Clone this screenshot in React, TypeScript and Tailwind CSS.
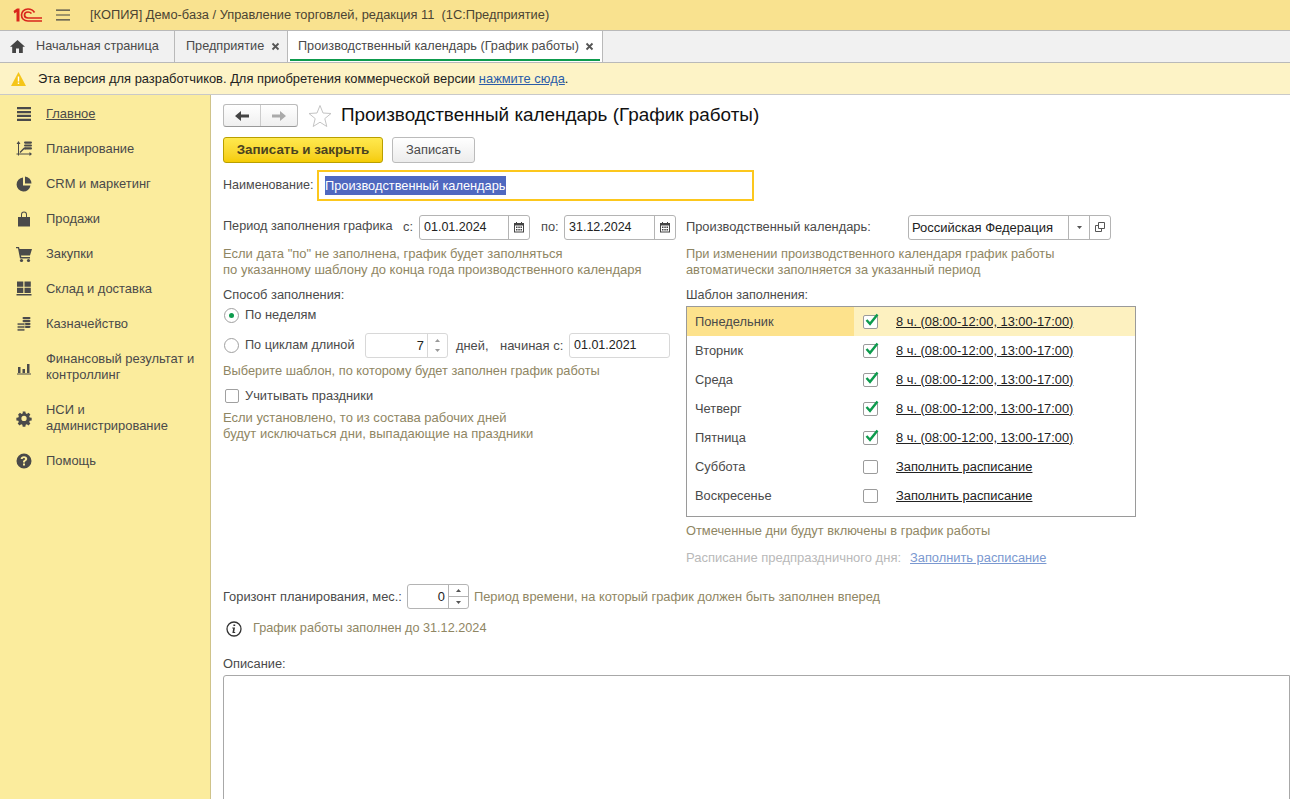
import React from "react";

const G = "#4a4a4a";
const Ico = ({ children }: { children: React.ReactNode }) => (
  <svg width="18" height="18" viewBox="0 0 18 18" fill={G} className="shrink-0">{children}</svg>
);

const Coins = ({ x, y, n, w, halo }: { x: number; y: number; n: number; w: number; halo?: boolean }) => (
  <>
    {Array.from({ length: n }).map((_, i) => (
      <rect key={i} x={x} y={y + i * 2.9} width={w} height="2.200" rx="1.100" stroke={halo ? "#fbec9d" : "none"} strokeWidth={halo ? 0.7 : 0} />
    ))}
  </>
);

const menu: { t: React.ReactNode; k: string; h: number; i: React.ReactNode; u?: boolean }[] = [
  { k: "a", t: "Главное", h: 35, u: true, i: <Ico><path d="M2 2h14v2.300H2zM2 5.900h14v2.300H2zM2 9.800h14v2.300H2zM2 13.700h14V16H2z" /></Ico> },
  { k: "b", t: "Планирование", h: 35, i: <Ico><path d="M3.500 3v12.500M1.500 14H15" fill="none" stroke={G} strokeWidth="1" /><path d="M1.500 4 3.500 1l2 3zM14.500 12l2.500 2-2.500 2z" /><path d="M5 12.500 9 8.500h2" fill="none" stroke={G} strokeWidth="1.300" /><Coins x={9} y={1.500} n={3} w={8} /></Ico> },
  { k: "c", t: "CRM и маркетинг", h: 35, i: <Ico><path d="M8 2.500a7 7 0 1 0 7.500 8H8z" /><path d="M10 1.500a7 7 0 0 1 6.500 7H10z" /></Ico> },
  { k: "d", t: "Продажи", h: 35, i: <Ico><path d="M3 7h3V4.500a3 3 0 0 1 6 0V7h3v9.500H3zM7 7h4V4.500a2 2 0 0 0-4 0z" fillRule="evenodd" /></Ico> },
  { k: "e", t: "Закупки", h: 35, i: <Ico><path d="M1 2h3l.5 2H17l-2 6.500H6l.3 1.500H15v1.500H5L3 3.200H1z" /><circle cx="6.500" cy="15.500" r="1.600" /><circle cx="13.500" cy="15.500" r="1.600" /></Ico> },
  { k: "f", t: "Склад и доставка", h: 35, i: <Ico><path d="M2 1.500h6.300v5.200H2zM9.500 1.500h6.300v5.200H9.500zM2 7.800h6.300V13H2zM9.500 7.800h6.300V13H9.500zM1.500 14h15v1.500h-15z" /></Ico> },
  { k: "g", t: "Казначейство", h: 35, i: <Ico><Coins x={7.500} y={2} n={4} w={8} /><Coins x={2} y={8} n={3} w={8} halo /></Ico> },
  { k: "h", t: <>Финансовый результат и<br />контроллинг</>, h: 51, i: <Ico><path d="M3 9h2.500v6H3zM7.500 11H10v4H7.500zM12 6h2.500v9H12zM2 15.500h14v1H2z" /></Ico> },
  { k: "i", t: <>НСИ и<br />администрирование</>, h: 51, i: <Ico><path fillRule="evenodd" d="M7.500 1.500h3l.4 2.200 1.300.6 1.900-1.300 2.100 2.100-1.300 1.900.6 1.300 2.200.4v3l-2.200.4-.6 1.300 1.300 1.900-2.100 2.100-1.900-1.300-1.300.6-.4 2.200h-3l-.4-2.200-1.300-.6-1.900 1.300-2.100-2.100 1.300-1.900-.6-1.300-2.200-.4v-3l2.200-.4.6-1.300L2.300 5.100l2.100-2.100 1.900 1.300 1.300-.6zM9 6.500a3 3 0 1 0 0 6 3 3 0 0 0 0-6z" transform="translate(1.100 1.100) scale(.88)" /></Ico> },
  { k: "j", t: "Помощь", h: 35, i: <Ico><path fillRule="evenodd" d="M9 1.500a7.500 7.500 0 1 1 0 15 7.500 7.500 0 0 1 0-15zM8 11.500v2h2v-2zM9 4.200c-2 0-3.200 1-3.300 2.800h2c.1-.7.500-1.100 1.200-1.100s1.100.4 1.100 1c0 .5-.3.8-.9 1.200-.9.600-1.100 1.200-1.100 2.400h2c0-.8.200-1.100.9-1.500.9-.6 1.300-1.200 1.300-2.200 0-1.600-1.200-2.600-3.200-2.600z" /></Ico> },
];

const Cal = () => (
  <svg width="12" height="12" viewBox="0 0 12 12" className="shrink-0">
    <path fill="#444" fillRule="evenodd" d="M1 2h2V1h1v1h4V1h1v1h2v9.500H1zM2 4.500v6h8v-6z" />
    <path fill="#444" d="M3 5.500h1.500V7H3zM5.300 5.500h1.500V7H5.300zM7.500 5.500H9V7H7.500zM3 8h1.500v1.500H3zM5.300 8h1.500v1.500H5.300zM7.500 8H9v1.500H7.500z" />
  </svg>
);

const DateField = ({ v, className }: { v: string; className: string }) => (
  <div className={`flex h-[25px] items-stretch rounded-[3px] border border-[#b4b4b4] bg-white ${className}`}>
    <span className="flex-1 pl-[4px] text-[12.500px] leading-[23px] text-[#222]">{v}</span>
    <span className="flex w-[21px] items-center justify-center border-l border-[#b4b4b4]"><Cal /></span>
  </div>
);

const Radio = ({ on }: { on?: boolean }) => (
  <span className="flex h-[15px] w-[15px] shrink-0 items-center justify-center rounded-full border border-[#a0a0a0] bg-white">
    {on && <span className="h-[5px] w-[5px] rounded-full bg-[#0d9b4d]" />}
  </span>
);

const Check = ({ on }: { on: boolean }) => (
  <span className="relative block h-[14px] w-[15px] rounded-[2px] border border-[#9b9b9b] bg-white">
    {on && (
      <svg width="16" height="14" viewBox="0 0 16 14" className="absolute left-0 top-[-3px]">
        <path d="M2.500 7 6 10.800 13.500 1.500" fill="none" stroke="#0d9b4d" strokeWidth="2.400" />
      </svg>
    )}
  </span>
);

const days: [string, boolean][] = [
  ["Понедельник", true], ["Вторник", true], ["Среда", true], ["Четверг", true], ["Пятница", true], ["Суббота", false], ["Воскресенье", false],
];

const Hint = ({ children, className = "" }: { children: React.ReactNode; className?: string }) => (
  <div className={`whitespace-nowrap leading-[16px] text-[#8f8663] ${className}`}>{children}</div>
);

const Close = () => (
  <svg width="9" height="9" viewBox="0 0 9 9" className="shrink-0"><path d="M1.500 1.500l6 6M7.500 1.500l-6 6" stroke="#555" strokeWidth="1.800" fill="none" /></svg>
);

export default function App() {
  return (
    <div className="flex h-[799px] w-[1290px] flex-col overflow-hidden bg-white text-[12.850px] text-[#4a4a4a]" style={{ fontFamily: '"Liberation Sans", Arial, sans-serif' }}>
      {/* title bar */}
      <div className="flex h-[30px] shrink-0 items-center bg-[#f9e28f]">
        <svg width="29" height="14" viewBox="0 0 29 14" className="ml-[13px]">
          <path d="M.5 3 4 .5h2.500v13h-3V4L1.500 5.500z" fill="#d9261c" />
          <path d="M21.500 4.500C20 2 17.500 1 15 1c-4 0-6.500 2.800-6.500 6 0 3.300 2.500 6 6.500 6h14M18.500 5.500C17.700 4.700 16.500 4 15 4c-2 0-3.500 1.300-3.500 3 0 1.800 1.500 3 3.500 3h14" fill="none" stroke="#d9261c" strokeWidth="1.700" />
        </svg>
        <svg width="14" height="12" viewBox="0 0 14 12" className="ml-[14px]"><path d="M0 .5h14v1.200H0zM0 5.400h14v1.200H0zM0 10.300h14v1.200H0z" fill="#444" /></svg>
        <span className="ml-[20px] whitespace-pre text-[#4b4433]">[КОПИЯ] Демо-база / Управление торговлей, редакция 11  (1С:Предприятие)</span>
      </div>

      {/* tabs */}
      <div className="flex h-[33px] shrink-0 items-stretch border-y border-[#b9b9b9] bg-[#f1f1f1]">
        <div className="flex w-[175px] items-center border-r border-[#b9b9b9] pl-[10px]">
          <svg width="15" height="13" viewBox="0 0 15 13"><path d="M7.500 0 15 6.800h-2.200V13H9V8.500H6V13H2.200V6.800H0z" fill="#444" /></svg>
          <span className="ml-[11px] text-[12.700px]">Начальная страница</span>
        </div>
        <div className="flex w-[113px] items-center border-r border-[#b9b9b9] pl-[11px]">
          <span className="text-[12.700px]">Предприятие</span>
          <span className="ml-[7px]"><Close /></span>
        </div>
        <div className="relative flex w-[315px] items-center border-r border-[#b9b9b9] bg-white pl-[10px]">
          <span className="text-[12.700px]">Производственный календарь (График работы)</span>
          <span className="ml-[6px]"><Close /></span>
          <span className="absolute bottom-[1px] left-[2px] right-[2px] h-[2px] bg-[#0d9b4d]" />
        </div>
      </div>

      {/* notice */}
      <div className="flex h-[32px] shrink-0 items-center border-b border-[#c9c9c9] bg-[#fdf3c6] pl-[11px]">
        <svg width="15" height="14" viewBox="0 0 15 14"><path d="M7.500 0 15 14H0z" fill="#f5c518" /><path d="M6.800 4.500h1.400v5H6.800zM6.800 10.500h1.400V12H6.800z" fill="#fff" /></svg>
        <span className="ml-[12px] text-[12.900px] text-[#222]">Эта версия для разработчиков. Для приобретения коммерческой версии <span className="text-[#2a5ca8] underline">нажмите сюда</span>.</span>
      </div>

      <div className="flex min-h-0 flex-1">
        {/* sidebar */}
        <nav className="w-[211px] shrink-0 border-r border-[#cfc38a] bg-[#fbec9d] pt-[1px]">
          {menu.map((m) => (
            <div key={m.k} className="flex items-center pl-[15px] pr-[2px] leading-[16px]" style={{ height: m.h }}>
              {m.i}
              <span className={`ml-[13px] text-[12.950px] ${m.u ? "underline" : ""}`}>{m.t}</span>
            </div>
          ))}
        </nav>

        {/* main */}
        <main className="min-w-0 flex-1 pl-[12px]">
          <div className="mt-[9px] flex h-[23px] items-center">
            <div className="flex h-[23px] w-[75px] rounded-[3px] border border-[#bbb] border-b-[#999] bg-gradient-to-b from-white to-[#efefef]">
              <span className="flex w-[37px] items-center justify-center border-r border-[#ccc]">
                <svg width="14" height="10" viewBox="0 0 14 10"><path d="M6 0v3.600h8v2.800H6V10L0 5z" fill="#444" /></svg>
              </span>
              <span className="flex flex-1 items-center justify-center">
                <svg width="14" height="10" viewBox="0 0 14 10"><path d="M8 0v3.600H0v2.800h8V10l6-5z" fill="#aaa" /></svg>
              </span>
            </div>
            <svg width="24" height="23" viewBox="0 0 24 23" className="ml-[10px]"><path d="M12 1.500 15 9l8 .5-6.200 5.100 2 7.900L12 18.200 5.200 22.500l2-7.900L1 9.500 9 9z" fill="none" stroke="#c4c4c4" /></svg>
            <h1 className="ml-[9px] text-[18.900px] font-normal text-[#111]">Производственный календарь (График работы)</h1>
          </div>

          <div className="mt-[10px] flex h-[26px] items-stretch gap-[9px]">
            <div className="flex w-[160px] items-center justify-center rounded-[3px] border border-[#b99f00] bg-gradient-to-b from-[#ffe94d] to-[#f5cc00] text-[13.400px] font-bold text-[#4a4220]">Записать и закрыть</div>
            <div className="flex w-[83px] items-center justify-center rounded-[3px] border border-[#bbb] bg-gradient-to-b from-white to-[#ececec]">Записать</div>
          </div>

          <div className="mt-[7px] flex h-[31px] items-center">
            <span className="w-[94px] text-[12.550px]">Наименование:</span>
            <div className="flex h-[31px] w-[437px] items-center border-2 border-[#fcc71d] pl-[6px]">
              <span className="bg-[#4f68c0] text-[12.800px] text-white">Производственный календарь</span>
            </div>
          </div>

          <div className="mt-[13px] flex">
            {/* left column */}
            <div className="w-[463px] shrink-0">
              <div className="flex h-[26px] items-center">
                <span className="w-[180px] text-[12.680px]">Период заполнения графика</span>
                <span className="w-[16px]">с:</span>
                <DateField v="01.01.2024" className="w-[111px]" />
                <span className="ml-[11px] w-[23px]">по:</span>
                <DateField v="31.12.2024" className="w-[112px]" />
              </div>
              <Hint className="mt-[6px] text-[13px]">Если дата "по" не заполнена, график будет заполняться<br />по указанному шаблону до конца года производственного календаря</Hint>
              <div className="mt-[9px] leading-[16px]">Способ заполнения:</div>
              <div className="mt-[4px] flex h-[16px] items-center gap-[6px] pl-[1px]"><Radio on /><span>По неделям</span></div>
              <div className="mt-[10px] flex h-[25px] items-center pl-[1px]">
                <Radio />
                <span className="ml-[6px] w-[120px] text-[12.700px]">По циклам длиной</span>
                <div className="flex h-[25px] w-[83px] rounded-[3px] border border-[#d8d8d8]">
                  <span className="flex-1 pr-[3px] text-right leading-[23px] text-[#222]">7</span>
                  <span className="flex w-[20px] flex-col items-center justify-center gap-[7px] border-l border-[#d8d8d8]">
                    <svg width="5" height="3" viewBox="0 0 5 3"><path d="M2.500 0 5 3H0z" fill="#999" /></svg>
                    <svg width="5" height="3" viewBox="0 0 5 3"><path d="M2.500 3 5 0H0z" fill="#999" /></svg>
                  </span>
                </div>
                <span className="ml-[8px] w-[44px]">дней,</span>
                <span className="w-[69px] text-[13px]">начиная с:</span>
                <div className="h-[25px] w-[101px] rounded-[3px] border border-[#d8d8d8] pl-[4px] text-[12.500px] leading-[23px] text-[#222]">01.01.2021</div>
              </div>
              <Hint className="mt-[5px] text-[12.800px]">Выберите шаблон, по которому будет заполнен график работы</Hint>
              <div className="mt-[8px] flex h-[18px] items-center gap-[6px] pl-[2px]">
                <span className="h-[14px] w-[14px] rounded-[2px] border border-[#a0a0a0] bg-white" /><span>Учитывать праздники</span>
              </div>
              <Hint className="mt-[5px] text-[13px]">Если установлено, то из состава рабочих дней<br />будут исключаться дни, выпадающие на праздники</Hint>
            </div>

            {/* right column */}
            <div className="w-[450px] shrink-0">
              <div className="flex h-[26px] items-center">
                <span className="w-[222px]">Производственный календарь:</span>
                <div className="flex h-[25px] w-[203px] rounded-[3px] border border-[#b4b4b4]">
                  <span className="flex-1 pl-[3px] text-[13px] leading-[23px] text-[#222]">Российская Федерация</span>
                  <span className="flex w-[21px] items-center justify-center border-l border-[#b4b4b4]">
                    <svg width="5" height="3" viewBox="0 0 5 3"><path d="M0 0h5L2.500 3z" fill="#555" /></svg>
                  </span>
                  <span className="flex w-[21px] items-center justify-center border-l border-[#b4b4b4]">
                    <svg width="10" height="10" viewBox="0 0 10 10"><path d="M3.500.5h6v6h-6zM3.500 3.500H.5v6h6v-3" fill="none" stroke="#555" /></svg>
                  </span>
                </div>
              </div>
              <Hint className="mt-[6px] text-[12.800px]">При изменении производственного календаря график работы<br />автоматически заполняется за указанный период</Hint>
              <div className="mt-[9px] text-[12.600px] leading-[16px]">Шаблон заполнения:</div>
              <div className="mt-[3px] h-[211px] w-[450px] border border-[#9a9a9a]">
                {days.map(([d, on], i) => (
                  <div key={d} className={`flex h-[29px] items-center ${i === 0 ? "bg-[#fdf1c0]" : ""}`}>
                    <span className={`flex h-full w-[167px] items-center pl-[8px] ${i === 0 ? "bg-[#fde28c]" : ""}`}>{d}</span>
                    <span className="ml-[9px]"><Check on={on} /></span>
                    <span className="ml-[18px] text-[#222] underline">{on ? "8 ч. (08:00-12:00, 13:00-17:00)" : "Заполнить расписание"}</span>
                  </div>
                ))}
              </div>
              <Hint className="mt-[6px]">Отмеченные дни будут включены в график работы</Hint>
              <div className="mt-[11px] flex leading-[16px]">
                <span className="w-[224px] text-[13px] text-[#b9b9b9]">Расписание предпраздничного дня:</span>
                <span className="text-[#7a98d0] underline">Заполнить расписание</span>
              </div>
            </div>
          </div>

          <div className="mt-[18px] flex h-[25px] items-center">
            <span className="w-[184px]">Горизонт планирования, мес.:</span>
            <div className="flex h-[25px] w-[62px] rounded-[3px] border border-[#b4b4b4]">
              <span className="flex-1 pr-[3px] text-right leading-[23px] text-[#222]">0</span>
              <span className="flex w-[20px] flex-col border-l border-[#b4b4b4]">
                <span className="flex flex-1 items-center justify-center border-b border-[#b4b4b4]"><svg width="5" height="3" viewBox="0 0 5 3"><path d="M2.500 0 5 3H0z" fill="#555" /></svg></span>
                <span className="flex flex-1 items-center justify-center"><svg width="5" height="3" viewBox="0 0 5 3"><path d="M2.500 3 5 0H0z" fill="#555" /></svg></span>
              </span>
            </div>
            <span className="ml-[5px] text-[#8f8663]">Период времени, на который график должен быть заполнен вперед</span>
          </div>

          <div className="mt-[9px] flex h-[22px] items-center">
            <svg width="16" height="16" viewBox="0 0 16 16" className="ml-[3px]">
              <circle cx="8" cy="8" r="7" fill="none" stroke="#333" strokeWidth="1.300" />
              <path d="M7.400 3.400h1.800v1.700H7.400zM6.300 6.500h2.700L8.200 11h1v.9H6.400l.8-4.500h-.9z" fill="#333" />
            </svg>
            <span className="ml-[11px] text-[12.700px] text-[#8f8663]">График работы заполнен до 31.12.2024</span>
          </div>

          <div className="mt-[16px] leading-[16px]">Описание:</div>
          <div className="mt-[3px] h-[200px] rounded-l-[3px] border border-[#a8a8a8]" />
        </main>
      </div>
    </div>
  );
}
